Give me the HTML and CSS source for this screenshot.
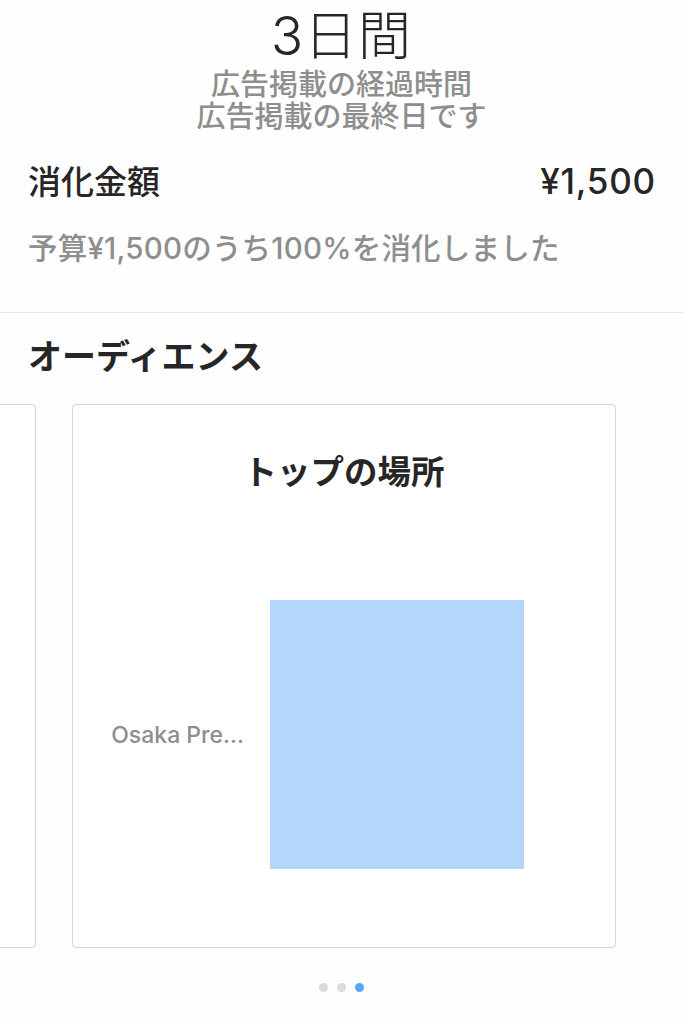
FILE: index.html
```html
<!DOCTYPE html>
<html lang="ja">
<head>
    <meta charset="UTF-8">
    <title>広告の結果</title>
    <link rel="stylesheet" href="styles.css">
</head>
<body>
    <div class="wrapper">
        <div class="duration">
            <div class="duration-value">3日間</div>
            <div class="duration-note">広告掲載の経過時間</div>
            <div class="duration-note">広告掲載の最終日です</div>
        </div>

        <div class="spend">
            <div class="spend-row">
                <span class="spend-label">消化金額</span>
                <span class="spend-amount">¥1,500</span>
            </div>
            <p class="spend-desc">予算¥1,500のうち100%を消化しました</p>
        </div>

        <div class="audience">
            <h2 class="audience-title">オーディエンス</h2>
            <div class="carousel">
                <div class="card"></div>
                <div class="card">
                    <h3 class="card-title">トップの場所</h3>
                    <div class="chart">
                        <span class="chart-label">Osaka Pre...</span>
                        <div class="chart-bar"></div>
                    </div>
                </div>
            </div>
            <ul class="dots">
                <li></li>
                <li></li>
                <li class="active"></li>
            </ul>
        </div>
    </div>
</body>
</html>
```

FILE: styles.css
```css
* {
    margin: 0;
    padding: 0;
}

body {
    background: #fefefe;
    color: #262626;
    font-family: "Inter", "Noto Sans CJK JP", sans-serif;
}

.wrapper {
    width: 683px;
    height: 1024px;
    overflow: hidden;
}

/* 期間 */
.duration {
    text-align: center;
    padding-top: 3px;
}

.duration-value {
    font-size: 53px;
    font-weight: 300;
    line-height: 66px;
    letter-spacing: 1px;
    color: #262626;
}

.duration-note {
    font-size: 29px;
    font-weight: 500;
    line-height: 32px;
    color: #8e8e8e;
}

/* 消化金額 */
.spend {
    padding: 26px 28px 0 28px;
    height: 153px;
    border-bottom: 1px solid #e6e6e6;
}

.spend-row {
    display: flex;
    justify-content: space-between;
    align-items: baseline;
    line-height: 44px;
}

.spend-label {
    font-size: 33px;
    font-weight: 500;
}

.spend-amount {
    font-size: 35px;
    font-weight: 500;
    letter-spacing: 0.8px;
    margin-right: -1px;
    color: #262626;
}

.spend-desc {
    margin-top: 24px;
    font-size: 29.5px;
    font-weight: 500;
    line-height: 40px;
    letter-spacing: 0.2px;
    color: #8e8e8e;
}

/* オーディエンス */
.audience-title {
    padding: 20px 28px 0 28px;
    font-size: 34px;
    font-weight: 700;
    line-height: 48px;
    color: #262626;
}

.carousel {
    display: flex;
    gap: 36px;
    margin-top: 23px;
    margin-left: -508px;
}

.card {
    flex: 0 0 544px;
    height: 544px;
    border: 1px solid #d6d6d6;
    border-radius: 4px;
    box-sizing: border-box;
    background: #fff;
}

.card-title {
    padding-top: 44px;
    text-align: center;
    font-size: 33.5px;
    font-weight: 700;
    line-height: 46px;
    color: #262626;
}

.chart {
    display: flex;
    align-items: center;
    gap: 26px;
    margin-top: 105px;
}

.chart-label {
    width: 171px;
    text-align: right;
    font-size: 23px;
    font-weight: 500;
    color: #8e8e8e;
}

.chart-bar {
    width: 254px;
    height: 269px;
    background: #b3d7fc;
}

.dots {
    display: flex;
    justify-content: center;
    gap: 9px;
    margin-top: 35px;
}

.dots li {
    list-style: none;
    width: 9px;
    height: 9px;
    border-radius: 50%;
    background: #dbdbdb;
}

.dots li.active {
    background: #58a6f7;
}
```
